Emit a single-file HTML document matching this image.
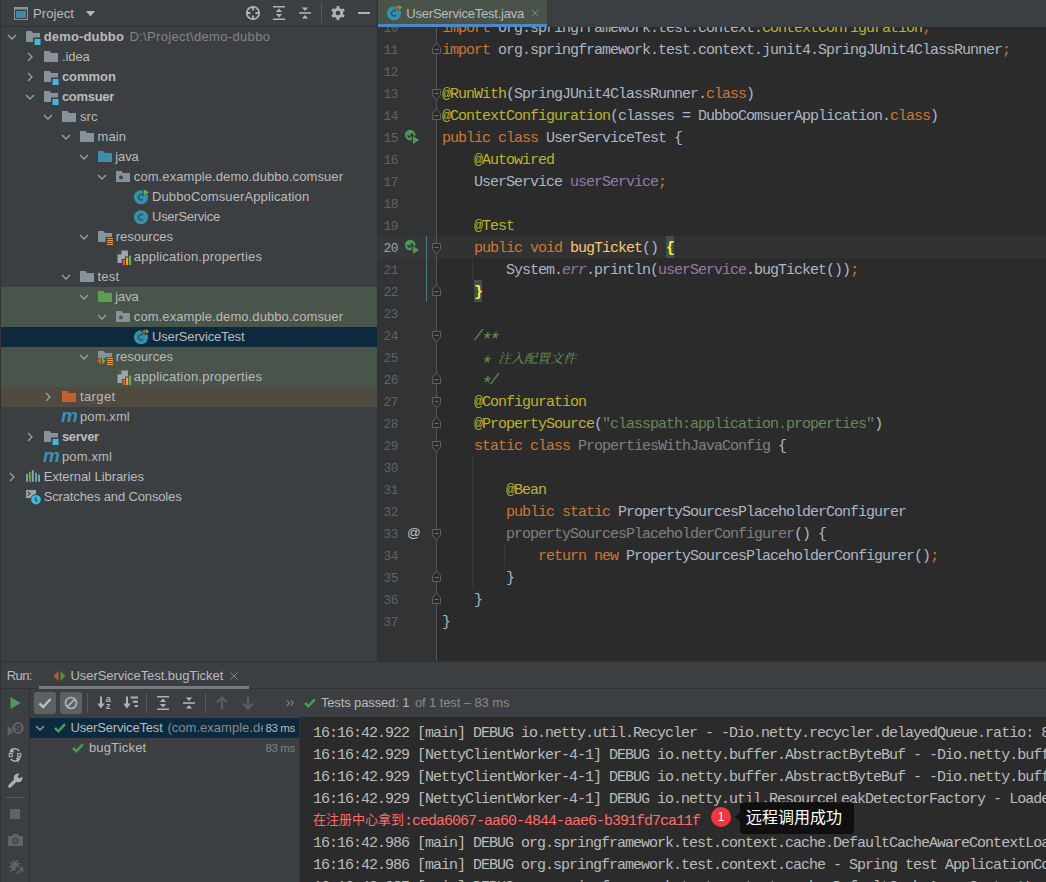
<!DOCTYPE html><html lang="zh"><head><meta charset="utf-8"><title>demo-dubbo</title><style>
*{box-sizing:border-box;margin:0;padding:0}
html,body{width:1046px;height:882px;overflow:hidden;background:#3c3f41}
body{position:relative;font-family:'Liberation Sans', 'Noto Sans CJK SC', sans-serif;font-size:13px;color:#bbbbbb;-webkit-font-smoothing:antialiased}
.abs{position:absolute}
svg{position:absolute;overflow:visible}
/* project panel */
#proj{left:0;top:0;width:377px;height:662px;background:#3c3f41;overflow:hidden}
#projhead{left:0;top:0;width:377px;height:27px;border-bottom:1px solid #323232}
.row{position:absolute;left:1px;width:376px;height:20px;line-height:20px;white-space:nowrap}
.t{position:absolute;top:0;font-size:13px;color:#bbbbbb;white-space:nowrap;height:20px;line-height:20px}
/* editor */
#ed{left:378px;top:0;width:668px;height:662px;background:#2b2b2b;overflow:hidden}
#tabs{left:0;top:0;width:668px;height:27px;background:#3c3f41;z-index:5}
#gut{left:0;top:27px;width:59px;height:635px;background:#313335}
.ln{position:absolute;left:0;width:21px;text-align:left;font-family:'Liberation Mono', 'Noto Sans CJK SC', monospace;font-size:12.8px;letter-spacing:-0.4px;color:#606366;height:22px;line-height:26px;padding-left:5.5px}
.cl{position:absolute;left:64px;height:22px;line-height:26px;font-family:'Liberation Mono', 'Noto Sans CJK SC', monospace;font-size:15px;letter-spacing:-1px;color:#a9b7c6;white-space:pre}
.k{color:#cc7832} .a{color:#bbb529} .s{color:#6a8759} .f{color:#9876aa} .fi{color:#9876aa;font-style:italic}
.m{color:#ffc66d} .u{color:#808080} .d{color:#629755;font-style:italic}
.st{position:relative;top:4.5px;font-size:18px;letter-spacing:-2.8px;line-height:0;margin-left:-1px;margin-right:1px}
.cjd{font-family:'Noto Serif CJK SC','Noto Sans CJK SC',serif;font-size:13px;letter-spacing:0;position:relative;top:-1px}
.br{color:#ffef28;background:#3b514d;font-weight:bold;display:inline-block;height:22px;vertical-align:top}
/* run panel */
#run{left:0;top:662px;width:1046px;height:220px;background:#3c3f41;overflow:hidden}
.co{position:absolute;left:14px;height:22px;line-height:22px;font-family:'Liberation Mono', 'Noto Sans CJK SC', monospace;font-size:15px;letter-spacing:-1px;color:#bbbbbb;white-space:pre}
.cj{font-size:13px;letter-spacing:0;position:relative;top:-1px}
</style></head><body>
<div id="proj" class="abs">
<div class="abs" style="left:0;top:0;width:1px;height:662px;background:#313335"></div>
<div id="projhead" class="abs">
<svg style="left:14px;top:7px" width="14" height="13" viewBox="0 0 14 13"><rect x="0.5" y="0.5" width="13" height="12" fill="none" stroke="#8a9399" stroke-width="1"/><rect x="0" y="0" width="14" height="2.5" fill="#8a9399"/><rect x="2" y="4" width="10" height="7" fill="#3d8aa5"/></svg>
<span class="t" style="left:33.1px;letter-spacing:0.072px;top:4px">Project</span>
<svg style="left:86px;top:11px" width="9" height="6" viewBox="0 0 9 6"><path d="M0 0 H9 L4.5 5.5 Z" fill="#b4b6b7"/></svg>
<svg style="left:245px;top:5px" width="16" height="16" viewBox="0 0 16 16"><circle cx="8" cy="8" r="6.2" fill="none" stroke="#afb1b3" stroke-width="1.8"/><path d="M8 1 V5.5 M8 10.5 V15 M1 8 H5.5 M10.5 8 H15" stroke="#afb1b3" stroke-width="1.8"/></svg>
<svg style="left:271px;top:5px" width="16" height="16" viewBox="0 0 16 16"><path d="M2 1.7 H14 M2 14.3 H14" stroke="#afb1b3" stroke-width="1.6"/><path d="M8 3.6 L11.2 7 H4.8 Z M8 12.4 L11.2 9 H4.8 Z" fill="#afb1b3"/></svg>
<svg style="left:297px;top:5px" width="16" height="16" viewBox="0 0 16 16"><path d="M2 8 H14" stroke="#afb1b3" stroke-width="1.6"/><path d="M8 6 L11.2 2.4 H4.8 Z M8 10 L11.2 13.6 H4.8 Z" fill="#afb1b3"/></svg>
<div class="abs" style="left:321px;top:3px;width:1px;height:20px;background:#555758"></div>
<svg style="left:330px;top:5px" width="16" height="16" viewBox="0 0 16 16"><g transform="translate(8 8)"><circle r="3.8" fill="none" stroke="#afb1b3" stroke-width="2.9"/><g fill="#afb1b3"><rect x="-1.4" y="-7" width="2.8" height="3"/><rect x="-1.4" y="4" width="2.8" height="3"/><rect x="-1.4" y="-7" width="2.8" height="3" transform="rotate(60)"/><rect x="-1.4" y="4" width="2.8" height="3" transform="rotate(60)"/><rect x="-1.4" y="-7" width="2.8" height="3" transform="rotate(120)"/><rect x="-1.4" y="4" width="2.8" height="3" transform="rotate(120)"/></g></g></svg>
<div class="abs" style="left:358px;top:12px;width:12px;height:2px;background:#afb1b3"></div>
</div>
<div class="row" style="top:27px;">
<svg style="left:3.4499999999999993px;top:2px" width="16" height="16" viewBox="0 0 16 16"><path d="M4 6 L8 10 L12 6" fill="none" stroke="#9da0a2" stroke-width="1.3"/></svg>
<svg style="left:24px;top:2px" width="16" height="16" viewBox="0 0 16 16"><path d="M1 2 H6.5 L8 4 H15 V13 H1 Z" fill="#87939a"/><rect x="8" y="8.5" width="8" height="8" fill="#3c3f41"/><rect x="9.5" y="10" width="6" height="6" fill="#40b6e0"/></svg>
<span class="t" style="left:42.7px;letter-spacing:0.165px;font-weight:bold">demo-dubbo</span>
<span class="t" style="left:128.4px;letter-spacing:0.346px;color:#828486">D:\Project\demo-dubbo</span>
</div>
<div class="row" style="top:47px;">
<svg style="left:20.95px;top:2px" width="16" height="16" viewBox="0 0 16 16"><path d="M6 4 L10 8 L6 12" fill="none" stroke="#9da0a2" stroke-width="1.3"/></svg>
<svg style="left:42px;top:2px" width="16" height="16" viewBox="0 0 16 16"><path d="M1 2 H6.5 L8 4 H15 V13 H1 Z" fill="#87939a"/></svg>
<span class="t" style="left:60.9px;letter-spacing:-0.076px;">.idea</span>
</div>
<div class="row" style="top:67px;">
<svg style="left:20.95px;top:2px" width="16" height="16" viewBox="0 0 16 16"><path d="M6 4 L10 8 L6 12" fill="none" stroke="#9da0a2" stroke-width="1.3"/></svg>
<svg style="left:42px;top:2px" width="16" height="16" viewBox="0 0 16 16"><path d="M1 2 H6.5 L8 4 H15 V13 H1 Z" fill="#87939a"/><rect x="8" y="8.5" width="8" height="8" fill="#3c3f41"/><rect x="9.5" y="10" width="6" height="6" fill="#40b6e0"/></svg>
<span class="t" style="left:60.9px;letter-spacing:-0.034px;font-weight:bold">common</span>
</div>
<div class="row" style="top:87px;">
<svg style="left:21.45px;top:2px" width="16" height="16" viewBox="0 0 16 16"><path d="M4 6 L8 10 L12 6" fill="none" stroke="#9da0a2" stroke-width="1.3"/></svg>
<svg style="left:42px;top:2px" width="16" height="16" viewBox="0 0 16 16"><path d="M1 2 H6.5 L8 4 H15 V13 H1 Z" fill="#87939a"/><rect x="8" y="8.5" width="8" height="8" fill="#3c3f41"/><rect x="9.5" y="10" width="6" height="6" fill="#40b6e0"/></svg>
<span class="t" style="left:60.9px;letter-spacing:-0.284px;font-weight:bold">comsuer</span>
</div>
<div class="row" style="top:107px;">
<svg style="left:39.45px;top:2px" width="16" height="16" viewBox="0 0 16 16"><path d="M4 6 L8 10 L12 6" fill="none" stroke="#9da0a2" stroke-width="1.3"/></svg>
<svg style="left:60px;top:2px" width="16" height="16" viewBox="0 0 16 16"><path d="M1 2 H6.5 L8 4 H15 V13 H1 Z" fill="#87939a"/></svg>
<span class="t" style="left:79.0px;letter-spacing:0.028px;">src</span>
</div>
<div class="row" style="top:127px;">
<svg style="left:57.45px;top:2px" width="16" height="16" viewBox="0 0 16 16"><path d="M4 6 L8 10 L12 6" fill="none" stroke="#9da0a2" stroke-width="1.3"/></svg>
<svg style="left:78px;top:2px" width="16" height="16" viewBox="0 0 16 16"><path d="M1 2 H6.5 L8 4 H15 V13 H1 Z" fill="#87939a"/></svg>
<span class="t" style="left:96.4px;letter-spacing:0.171px;">main</span>
</div>
<div class="row" style="top:147px;">
<svg style="left:75.45px;top:2px" width="16" height="16" viewBox="0 0 16 16"><path d="M4 6 L8 10 L12 6" fill="none" stroke="#9da0a2" stroke-width="1.3"/></svg>
<svg style="left:96px;top:2px" width="16" height="16" viewBox="0 0 16 16"><path d="M1 2 H6.5 L8 4 H15 V13 H1 Z" fill="#3d8dab"/></svg>
<span class="t" style="left:114.2px;letter-spacing:-0.086px;">java</span>
</div>
<div class="row" style="top:167px;">
<svg style="left:93.45px;top:2px" width="16" height="16" viewBox="0 0 16 16"><path d="M4 6 L8 10 L12 6" fill="none" stroke="#9da0a2" stroke-width="1.3"/></svg>
<svg style="left:114px;top:2px" width="16" height="16" viewBox="0 0 16 16"><path d="M1 2 H6.5 L8 4 H15 V13 H1 Z" fill="#87939a"/><circle cx="6" cy="8.4" r="1.9" fill="#3c3f41"/></svg>
<span class="t" style="left:132.8px;letter-spacing:0.087px;">com.example.demo.dubbo.comsuer</span>
</div>
<div class="row" style="top:187px;">
<svg style="left:132px;top:2px" width="16" height="16" viewBox="0 0 16 16"><circle cx="8" cy="8.2" r="7" fill="#3592a8"/><path d="M10 10.2 A2.7 2.7 0 1 1 10 6.2" fill="none" stroke="#22505f" stroke-width="1.2"/><path d="M9.6 -1 L17.2 3.3 L9.6 7.6 Z" fill="#3c3f41"/><path d="M10.7 0.2 L16 3.3 L10.7 6.4 Z" fill="#62b543"/></svg>
<span class="t" style="left:151.0px;letter-spacing:0.116px;">DubboComsuerApplication</span>
</div>
<div class="row" style="top:207px;">
<svg style="left:132px;top:2px" width="16" height="16" viewBox="0 0 16 16"><circle cx="8" cy="8.2" r="7" fill="#3592a8"/><path d="M10 10.2 A2.7 2.7 0 1 1 10 6.2" fill="none" stroke="#22505f" stroke-width="1.2"/></svg>
<span class="t" style="left:151.0px;letter-spacing:-0.260px;">UserService</span>
</div>
<div class="row" style="top:227px;">
<svg style="left:75.45px;top:2px" width="16" height="16" viewBox="0 0 16 16"><path d="M4 6 L8 10 L12 6" fill="none" stroke="#9da0a2" stroke-width="1.3"/></svg>
<svg style="left:96px;top:2px" width="16" height="16" viewBox="0 0 16 16"><path d="M1 2 H6.5 L8 4 H15 V13 H1 Z" fill="#87939a"/><rect x="8.5" y="8" width="8" height="9" fill="#3c3f41"/><path d="M10 9.5 H16 M10 11.5 H16 M10 13.5 H16 M10 15.5 H16" stroke="#e8a33d" stroke-width="1.1"/></svg>
<span class="t" style="left:114.7px;letter-spacing:0.028px;">resources</span>
</div>
<div class="row" style="top:247px;">
<svg style="left:114px;top:2px" width="16" height="16" viewBox="0 0 16 16"><path d="M6 1.5 H13 V14 H2.5 V5 Z" fill="#9aa7b0"/><path d="M2.5 5 L6 1.5 V5 Z" fill="#3c3f41"/><path d="M6 1.5 V5 H2.5" fill="none" stroke="#3c3f41" stroke-width="0.8"/><path d="M6.8 16.5 V10 H10 V7.6 H13 V5.7 H17 V16.5 Z" fill="#3c3f41"/><rect x="7.9" y="11" width="2.2" height="5" fill="#e05a2b"/><rect x="11" y="8.6" width="2.2" height="7.4" fill="#e8a33d"/><rect x="14.1" y="6.7" width="2" height="9.3" fill="#62b543"/></svg>
<span class="t" style="left:132.8px;letter-spacing:0.220px;">application.properties</span>
</div>
<div class="row" style="top:267px;">
<svg style="left:57.45px;top:2px" width="16" height="16" viewBox="0 0 16 16"><path d="M4 6 L8 10 L12 6" fill="none" stroke="#9da0a2" stroke-width="1.3"/></svg>
<svg style="left:78px;top:2px" width="16" height="16" viewBox="0 0 16 16"><path d="M1 2 H6.5 L8 4 H15 V13 H1 Z" fill="#87939a"/></svg>
<span class="t" style="left:96.4px;letter-spacing:0.277px;">test</span>
</div>
<div class="row" style="top:287px;background:#49544a;">
<svg style="left:75.45px;top:2px" width="16" height="16" viewBox="0 0 16 16"><path d="M4 6 L8 10 L12 6" fill="none" stroke="#9da0a2" stroke-width="1.3"/></svg>
<svg style="left:96px;top:2px" width="16" height="16" viewBox="0 0 16 16"><path d="M1 2 H6.5 L8 4 H15 V13 H1 Z" fill="#5b9e4d"/></svg>
<span class="t" style="left:114.2px;letter-spacing:-0.086px;">java</span>
</div>
<div class="row" style="top:307px;background:#49544a;">
<svg style="left:93.45px;top:2px" width="16" height="16" viewBox="0 0 16 16"><path d="M4 6 L8 10 L12 6" fill="none" stroke="#9da0a2" stroke-width="1.3"/></svg>
<svg style="left:114px;top:2px" width="16" height="16" viewBox="0 0 16 16"><path d="M1 2 H6.5 L8 4 H15 V13 H1 Z" fill="#87939a"/><circle cx="6" cy="8.4" r="1.9" fill="#49544a"/></svg>
<span class="t" style="left:132.8px;letter-spacing:0.087px;">com.example.demo.dubbo.comsuer</span>
</div>
<div class="row" style="top:327px;background:#0d293e;">
<svg style="left:132px;top:2px" width="16" height="16" viewBox="0 0 16 16"><circle cx="8" cy="8.2" r="7" fill="#3592a8"/><path d="M10 10.2 A2.7 2.7 0 1 1 10 6.2" fill="none" stroke="#22505f" stroke-width="1.2"/><path d="M7.6 2.4 L12.6 -1.2 L17.4 2.4 L12.6 6 Z" fill="#0d293e"/><path d="M8.8 2.4 L12.3 0 V4.8 Z" fill="#e05a2b"/><path d="M12.9 0 L16.2 2.4 L12.9 4.8 Z" fill="#62b543"/></svg>
<span class="t" style="left:151.0px;letter-spacing:-0.153px;">UserServiceTest</span>
</div>
<div class="row" style="top:347px;background:#49544a;">
<svg style="left:75.45px;top:2px" width="16" height="16" viewBox="0 0 16 16"><path d="M4 6 L8 10 L12 6" fill="none" stroke="#9da0a2" stroke-width="1.3"/></svg>
<svg style="left:96px;top:2px" width="16" height="16" viewBox="0 0 16 16"><path d="M1 2 H6.5 L8 4 H15 V13 H1 Z" fill="#87939a"/><rect x="0" y="9.2" width="9" height="8" fill="#49544a"/><rect x="8.6" y="8" width="8" height="9" fill="#49544a"/><path d="M10 9.5 H16 M10 11.5 H16 M10 13.5 H16 M10 15.5 H16" stroke="#e8a33d" stroke-width="1.1"/><path d="M4 8.5 L4 15.5 L0.5 12 Z" fill="#e05a2b"/><path d="M5 8.5 L5 15.5 L8.5 12 Z" fill="#62b543"/></svg>
<span class="t" style="left:114.7px;letter-spacing:0.028px;">resources</span>
</div>
<div class="row" style="top:367px;background:#49544a;">
<svg style="left:114px;top:2px" width="16" height="16" viewBox="0 0 16 16"><path d="M6 1.5 H13 V14 H2.5 V5 Z" fill="#9aa7b0"/><path d="M2.5 5 L6 1.5 V5 Z" fill="#49544a"/><path d="M6 1.5 V5 H2.5" fill="none" stroke="#49544a" stroke-width="0.8"/><path d="M6.8 16.5 V10 H10 V7.6 H13 V5.7 H17 V16.5 Z" fill="#49544a"/><rect x="7.9" y="11" width="2.2" height="5" fill="#e05a2b"/><rect x="11" y="8.6" width="2.2" height="7.4" fill="#e8a33d"/><rect x="14.1" y="6.7" width="2" height="9.3" fill="#62b543"/></svg>
<span class="t" style="left:132.8px;letter-spacing:0.220px;">application.properties</span>
</div>
<div class="row" style="top:387px;background:#4f4b41;">
<svg style="left:38.95px;top:2px" width="16" height="16" viewBox="0 0 16 16"><path d="M6 4 L10 8 L6 12" fill="none" stroke="#9da0a2" stroke-width="1.3"/></svg>
<svg style="left:60px;top:2px" width="16" height="16" viewBox="0 0 16 16"><path d="M1 2 H6.5 L8 4 H15 V13 H1 Z" fill="#c4602b"/></svg>
<span class="t" style="left:79.0px;letter-spacing:0.390px;">target</span>
</div>
<div class="row" style="top:407px;">
<span class="abs" style="left:60px;top:-1px;width:17px;height:20px;line-height:20px;font-family:'Liberation Sans', 'Noto Sans CJK SC', sans-serif;font-style:italic;font-weight:bold;font-size:19px;color:#3a90b6;letter-spacing:-1px">m</span>
<span class="t" style="left:79.0px;letter-spacing:0.096px;">pom.xml</span>
</div>
<div class="row" style="top:427px;">
<svg style="left:20.95px;top:2px" width="16" height="16" viewBox="0 0 16 16"><path d="M6 4 L10 8 L6 12" fill="none" stroke="#9da0a2" stroke-width="1.3"/></svg>
<svg style="left:42px;top:2px" width="16" height="16" viewBox="0 0 16 16"><path d="M1 2 H6.5 L8 4 H15 V13 H1 Z" fill="#87939a"/><rect x="8" y="8.5" width="8" height="8" fill="#3c3f41"/><rect x="9.5" y="10" width="6" height="6" fill="#40b6e0"/></svg>
<span class="t" style="left:60.9px;letter-spacing:-0.349px;font-weight:bold">server</span>
</div>
<div class="row" style="top:447px;">
<span class="abs" style="left:42px;top:-1px;width:17px;height:20px;line-height:20px;font-family:'Liberation Sans', 'Noto Sans CJK SC', sans-serif;font-style:italic;font-weight:bold;font-size:19px;color:#3a90b6;letter-spacing:-1px">m</span>
<span class="t" style="left:60.9px;letter-spacing:0.146px;">pom.xml</span>
</div>
<div class="row" style="top:467px;">
<svg style="left:2.9499999999999993px;top:2px" width="16" height="16" viewBox="0 0 16 16"><path d="M6 4 L10 8 L6 12" fill="none" stroke="#9da0a2" stroke-width="1.3"/></svg>
<svg style="left:24px;top:2px" width="16" height="16" viewBox="0 0 16 16"><rect x="1.1" y="5" width="1.7" height="7.8" fill="#9aa7b0"/><rect x="3.9" y="3" width="1.8" height="9.8" fill="#62b543"/><rect x="6.8" y="1.2" width="1.8" height="11.6" fill="#9aa7b0"/><rect x="10.2" y="3.7" width="1.8" height="9.1" fill="#40b6e0"/><rect x="13.2" y="5.6" width="1.7" height="7.2" fill="#9aa7b0"/></svg>
<span class="t" style="left:42.7px;letter-spacing:-0.056px;">External Libraries</span>
</div>
<div class="row" style="top:487px;">
<svg style="left:24px;top:2px" width="16" height="16" viewBox="0 0 16 16"><path d="M1 1 H11 V9 H1 Z" fill="#9aa7b0"/><path d="M2.6 2.6 L5 4.6 L2.6 6.6" stroke="#3c3f41" stroke-width="1.2" fill="none"/><circle cx="11" cy="10.7" r="5.6" fill="#3c3f41"/><circle cx="11" cy="10.7" r="4.8" fill="#40b6e0"/><path d="M10.6 8 V11 L12.6 12.6" stroke="#3c3f41" stroke-width="1.3" fill="none"/></svg>
<span class="t" style="left:42.7px;letter-spacing:-0.139px;">Scratches and Consoles</span>
</div>
</div>
<div class="abs" style="left:377px;top:0;width:1px;height:662px;background:#323232"></div>
<div id="ed" class="abs">
<div id="tabs" class="abs">
<div class="abs" style="left:0;top:0;width:169px;height:27px;background:#4a534a"></div>
<div class="abs" style="left:0;top:24px;width:169px;height:3px;background:#4a88c7"></div>
<svg style="left:7.5px;top:4.5px" width="16" height="16" viewBox="0 0 16 16"><circle cx="8" cy="8.2" r="7" fill="#3592a8"/><path d="M10 10.2 A2.7 2.7 0 1 1 10 6.2" fill="none" stroke="#22505f" stroke-width="1.2"/><path d="M7.6 2.4 L12.6 -1.2 L17.4 2.4 L12.6 6 Z" fill="#4a534a"/><path d="M8.8 2.4 L12.3 0 V4.8 Z" fill="#e05a2b"/><path d="M12.9 0 L16.2 2.4 L12.9 4.8 Z" fill="#62b543"/></svg>
<span class="t" style="left:28.3px;letter-spacing:-0.216px;top:4px">UserServiceTest.java</span>
<svg style="left:153px;top:9px" width="8" height="8" viewBox="0 0 8 8"><path d="M0.5 0.5 L7.5 7.5 M7.5 0.5 L0.5 7.5" stroke="#7d8487" stroke-width="1"/></svg>
</div>
<div id="gut" class="abs"></div>
<div class="abs" style="left:58px;top:27px;width:1px;height:635px;background:#555555"></div>
<div class="abs" style="left:59px;top:236px;width:609px;height:22px;background:#323232"></div>
<div class="abs" style="left:0;top:236px;width:58px;height:22px;background:#35373a"></div>
<div class="ln" style="top:16px;color:#606366">10</div>
<div class="cl" style="top:16px"><span class="k">import</span> org.springframework.test.context.<span class="a">ContextConfiguration</span><span class="k">;</span></div>
<div class="ln" style="top:38px;color:#606366">11</div>
<div class="cl" style="top:38px"><span class="k">import</span> org.springframework.test.context.junit4.SpringJUnit4ClassRunner<span class="k">;</span></div>
<div class="ln" style="top:60px;color:#606366">12</div>
<div class="ln" style="top:82px;color:#606366">13</div>
<div class="cl" style="top:82px"><span class="a">@RunWith</span>(SpringJUnit4ClassRunner.<span class="k">class</span>)</div>
<div class="ln" style="top:104px;color:#606366">14</div>
<div class="cl" style="top:104px"><span class="a">@ContextConfiguration</span>(classes = DubboComsuerApplication.<span class="k">class</span>)</div>
<div class="ln" style="top:126px;color:#606366">15</div>
<div class="cl" style="top:126px"><span class="k">public class </span>UserServiceTest {</div>
<div class="ln" style="top:148px;color:#606366">16</div>
<div class="cl" style="top:148px">    <span class="a">@Autowired</span></div>
<div class="ln" style="top:170px;color:#606366">17</div>
<div class="cl" style="top:170px">    UserService <span class="f">userService</span><span class="k">;</span></div>
<div class="ln" style="top:192px;color:#606366">18</div>
<div class="ln" style="top:214px;color:#606366">19</div>
<div class="cl" style="top:214px">    <span class="a">@Test</span></div>
<div class="ln" style="top:236px;color:#a4a3a3">20</div>
<div class="cl" style="top:236px">    <span class="k">public void </span><span class="m">bugTicket</span>() <span class="br">{</span></div>
<div class="ln" style="top:258px;color:#606366">21</div>
<div class="cl" style="top:258px">        System.<span class="fi">err</span>.println(<span class="f">userService</span>.bugTicket())<span class="k">;</span></div>
<div class="ln" style="top:280px;color:#606366">22</div>
<div class="cl" style="top:280px">    <span class="br">}</span></div>
<div class="ln" style="top:302px;color:#606366">23</div>
<div class="ln" style="top:324px;color:#606366">24</div>
<div class="cl" style="top:324px">    <span class="d">/<span class="st">*</span><span class="st">*</span></span></div>
<div class="ln" style="top:346px;color:#606366">25</div>
<div class="cl" style="top:346px">    <span class="d"> <span class="st">*</span> <span class="cjd">注入配置文件</span></span></div>
<div class="ln" style="top:368px;color:#606366">26</div>
<div class="cl" style="top:368px">    <span class="d"> <span class="st">*</span>/</span></div>
<div class="ln" style="top:390px;color:#606366">27</div>
<div class="cl" style="top:390px">    <span class="a">@Configuration</span></div>
<div class="ln" style="top:412px;color:#606366">28</div>
<div class="cl" style="top:412px">    <span class="a">@PropertySource</span>(<span class="s">&quot;classpath:application.properties&quot;</span>)</div>
<div class="ln" style="top:434px;color:#606366">29</div>
<div class="cl" style="top:434px">    <span class="k">static class </span><span class="u">PropertiesWithJavaConfig</span> {</div>
<div class="ln" style="top:456px;color:#606366">30</div>
<div class="ln" style="top:478px;color:#606366">31</div>
<div class="cl" style="top:478px">        <span class="a">@Bean</span></div>
<div class="ln" style="top:500px;color:#606366">32</div>
<div class="cl" style="top:500px">        <span class="k">public static </span>PropertySourcesPlaceholderConfigurer</div>
<div class="ln" style="top:522px;color:#606366">33</div>
<div class="cl" style="top:522px">        <span class="u">propertySourcesPlaceholderConfigurer</span>() {</div>
<div class="ln" style="top:544px;color:#606366">34</div>
<div class="cl" style="top:544px">            <span class="k">return new </span>PropertySourcesPlaceholderConfigurer()<span class="k">;</span></div>
<div class="ln" style="top:566px;color:#606366">35</div>
<div class="cl" style="top:566px">        }</div>
<div class="ln" style="top:588px;color:#606366">36</div>
<div class="cl" style="top:588px">    }</div>
<div class="ln" style="top:610px;color:#606366">37</div>
<div class="cl" style="top:610px">}</div>
<svg style="left:54px;top:89px" width="9" height="11" viewBox="0 0 9 11"><path d="M0.5 0.5 H8.5 V6 L4.5 10.5 L0.5 6 Z" fill="#2b2b2b" stroke="#5f5f5f" stroke-width="1"/><path d="M2.5 4.5 H6.5" stroke="#707070" stroke-width="1"/></svg>
<svg style="left:54px;top:243px" width="9" height="11" viewBox="0 0 9 11"><path d="M0.5 0.5 H8.5 V6 L4.5 10.5 L0.5 6 Z" fill="#2b2b2b" stroke="#5f5f5f" stroke-width="1"/><path d="M2.5 4.5 H6.5" stroke="#707070" stroke-width="1"/></svg>
<svg style="left:54px;top:331px" width="9" height="11" viewBox="0 0 9 11"><path d="M0.5 0.5 H8.5 V6 L4.5 10.5 L0.5 6 Z" fill="#2b2b2b" stroke="#5f5f5f" stroke-width="1"/><path d="M2.5 4.5 H6.5" stroke="#707070" stroke-width="1"/></svg>
<svg style="left:54px;top:397px" width="9" height="11" viewBox="0 0 9 11"><path d="M0.5 0.5 H8.5 V6 L4.5 10.5 L0.5 6 Z" fill="#2b2b2b" stroke="#5f5f5f" stroke-width="1"/><path d="M2.5 4.5 H6.5" stroke="#707070" stroke-width="1"/></svg>
<svg style="left:54px;top:441px" width="9" height="11" viewBox="0 0 9 11"><path d="M0.5 0.5 H8.5 V6 L4.5 10.5 L0.5 6 Z" fill="#2b2b2b" stroke="#5f5f5f" stroke-width="1"/><path d="M2.5 4.5 H6.5" stroke="#707070" stroke-width="1"/></svg>
<svg style="left:54px;top:529px" width="9" height="11" viewBox="0 0 9 11"><path d="M0.5 0.5 H8.5 V6 L4.5 10.5 L0.5 6 Z" fill="#2b2b2b" stroke="#5f5f5f" stroke-width="1"/><path d="M2.5 4.5 H6.5" stroke="#707070" stroke-width="1"/></svg>
<svg style="left:54px;top:42px" width="9" height="12" viewBox="0 0 9 12"><path d="M0.5 11.5 H8.5 V5.5 L4.5 0.8 L0.5 5.5 Z" fill="#2b2b2b" stroke="#5f5f5f" stroke-width="1"/><path d="M2.5 7.5 H6.5" stroke="#707070" stroke-width="1"/></svg>
<svg style="left:54px;top:108px" width="9" height="12" viewBox="0 0 9 12"><path d="M0.5 11.5 H8.5 V5.5 L4.5 0.8 L0.5 5.5 Z" fill="#2b2b2b" stroke="#5f5f5f" stroke-width="1"/><path d="M2.5 7.5 H6.5" stroke="#707070" stroke-width="1"/></svg>
<svg style="left:54px;top:284px" width="9" height="12" viewBox="0 0 9 12"><path d="M0.5 11.5 H8.5 V5.5 L4.5 0.8 L0.5 5.5 Z" fill="#2b2b2b" stroke="#5f5f5f" stroke-width="1"/><path d="M2.5 7.5 H6.5" stroke="#707070" stroke-width="1"/></svg>
<svg style="left:54px;top:372px" width="9" height="12" viewBox="0 0 9 12"><path d="M0.5 11.5 H8.5 V5.5 L4.5 0.8 L0.5 5.5 Z" fill="#2b2b2b" stroke="#5f5f5f" stroke-width="1"/><path d="M2.5 7.5 H6.5" stroke="#707070" stroke-width="1"/></svg>
<svg style="left:54px;top:416px" width="9" height="12" viewBox="0 0 9 12"><path d="M0.5 11.5 H8.5 V5.5 L4.5 0.8 L0.5 5.5 Z" fill="#2b2b2b" stroke="#5f5f5f" stroke-width="1"/><path d="M2.5 7.5 H6.5" stroke="#707070" stroke-width="1"/></svg>
<svg style="left:54px;top:570px" width="9" height="12" viewBox="0 0 9 12"><path d="M0.5 11.5 H8.5 V5.5 L4.5 0.8 L0.5 5.5 Z" fill="#2b2b2b" stroke="#5f5f5f" stroke-width="1"/><path d="M2.5 7.5 H6.5" stroke="#707070" stroke-width="1"/></svg>
<svg style="left:54px;top:592px" width="9" height="12" viewBox="0 0 9 12"><path d="M0.5 11.5 H8.5 V5.5 L4.5 0.8 L0.5 5.5 Z" fill="#2b2b2b" stroke="#5f5f5f" stroke-width="1"/><path d="M2.5 7.5 H6.5" stroke="#707070" stroke-width="1"/></svg>
<svg style="left:26px;top:129px" width="16" height="16" viewBox="0 0 16 16"><circle cx="6.2" cy="6.1" r="5.3" fill="#499c54"/><path d="M3.4 6.2 L5.4 8.2 L8.8 4.2" fill="none" stroke="#313335" stroke-width="1.5"/><path d="M7.7 5 L16.8 10.9 L7.7 16.8 Z" fill="#313335"/><path d="M8.9 6.9 L15.2 10.9 L8.9 14.9 Z" fill="#499c54"/></svg>
<svg style="left:26px;top:239px" width="16" height="16" viewBox="0 0 16 16"><circle cx="6.2" cy="6.1" r="5.3" fill="#499c54"/><path d="M3.4 6.2 L5.4 8.2 L8.8 4.2" fill="none" stroke="#313335" stroke-width="1.5"/><path d="M7.7 5 L16.8 10.9 L7.7 16.8 Z" fill="#313335"/><path d="M8.9 6.9 L15.2 10.9 L8.9 14.9 Z" fill="#499c54"/></svg>
<span class="abs" style="left:29px;top:522px;height:22px;line-height:21px;font-size:13.5px;color:#c4c4c4;font-family:'Liberation Sans', 'Noto Sans CJK SC', sans-serif">@</span>
<div class="abs" style="left:48px;top:236px;width:1px;height:66px;background:#4c7c77"></div>
<div class="abs" style="left:94px;top:258px;width:1px;height:22px;background:#393939"></div>
<div class="abs" style="left:94px;top:456px;width:1px;height:132px;background:#393939"></div>
<div class="abs" style="left:126px;top:544px;width:1px;height:22px;background:#393939"></div>
</div>
<div class="abs" style="left:0;top:661px;width:1046px;height:1px;background:#323232;z-index:6"></div>
<div id="run" class="abs">
<div class="abs" style="left:0;top:0;width:1px;height:220px;background:#313335"></div>
<span class="t" style="left:6.8px;letter-spacing:-0.623px;top:4px">Run:</span>
<svg style="left:52.5px;top:8.5px" width="13" height="10" viewBox="0 0 13 10"><path d="M5.5 0 V10 L0.5 5 Z" fill="#b5592f"/><path d="M7.5 0 V10 L12.5 5 Z" fill="#4f8f3f"/></svg>
<span class="t" style="left:70.5px;letter-spacing:-0.056px;top:4px">UserServiceTest.bugTicket</span>
<svg style="left:230px;top:10px" width="8" height="8" viewBox="0 0 8 8"><path d="M0.5 0.5 L7.5 7.5 M7.5 0.5 L0.5 7.5" stroke="#7d8487" stroke-width="1"/></svg>
<div class="abs" style="left:39px;top:24px;width:210px;height:3px;background:#747a80;z-index:2"></div>
<div class="abs" style="left:0;top:26px;width:1046px;height:1px;background:#323232"></div>
<div class="abs" style="left:29px;top:27px;width:1px;height:193px;background:#323232"></div>
<svg style="left:10px;top:35px" width="11" height="12" viewBox="0 0 11 12"><path d="M0.5 0 L10.5 6 L0.5 12 Z" fill="#499c54"/></svg>
<svg style="left:7px;top:60px" width="17" height="14" viewBox="0 0 17 14"><path d="M0.6 4 L8.6 8.8 L0.6 13.6 Z" fill="#5e6163"/><circle cx="11" cy="6" r="6.6" fill="#3c3f41"/><circle cx="11" cy="6" r="5.9" fill="#5e6163"/><text x="11" y="9.6" text-anchor="middle" font-family="'Liberation Sans', 'Noto Sans CJK SC', sans-serif" font-weight="bold" font-size="11" fill="#3c3f41" stroke="#3c3f41" stroke-width="0.4">9</text></svg>
<svg style="left:8px;top:85px" width="14" height="16" viewBox="0 0 14 16"><path d="M2.2 5.2 A5 5 0 0 1 11.2 4.2" fill="none" stroke="#afb1b3" stroke-width="1.5"/><path d="M3.8 0.8 L1.6 5.6 L6.2 5.2 Z" fill="#afb1b3"/><path d="M11.8 10.8 A5 5 0 0 1 2.8 11.8" fill="none" stroke="#afb1b3" stroke-width="1.5"/><path d="M10.2 15.2 L12.4 10.4 L7.8 10.8 Z" fill="#afb1b3"/><rect x="1.2" y="6.6" width="3" height="3" fill="none" stroke="#afb1b3" stroke-width="1.1"/><rect x="9.8" y="6.6" width="3" height="3" fill="none" stroke="#afb1b3" stroke-width="1.1"/></svg>
<svg style="left:8px;top:111px" width="15" height="15" viewBox="0 0 15 15"><path d="M1.8 13.2 L8.4 6.6" stroke="#afb1b3" stroke-width="3.2" stroke-linecap="round"/><path d="M14.2 3.4 L11.6 5.6 L9.4 3.4 L11.6 0.8 A4.4 4.4 0 1 0 14.2 3.4 Z" fill="#afb1b3"/></svg>
<div class="abs" style="left:5px;top:135px;width:20px;height:1px;background:#555758"></div>
<div class="abs" style="left:10px;top:147px;width:10px;height:10px;background:#616365"></div>
<svg style="left:8px;top:172px" width="15" height="12" viewBox="0 0 15 12"><path d="M0 2 H4 L5 0 H10 L11 2 H15 V12 H0 Z" fill="#616365"/><circle cx="7.5" cy="6.8" r="3" fill="#3c3f41"/><circle cx="7.5" cy="6.8" r="1.7" fill="#616365"/></svg>
<svg style="left:9px;top:197px" width="14" height="15" viewBox="0 0 14 15"><ellipse cx="6" cy="7.5" rx="3.6" ry="4.6" fill="#616365"/><path d="M1 4 L4 6 M11 4 L8 6 M0 8 H3 M1 12.5 L4 10 M3.5 1 L5.5 3.5 M8.5 1 L6.5 3.5" stroke="#616365" stroke-width="1.3"/><rect x="6.5" y="8" width="8" height="8" fill="#3c3f41"/><path d="M8 14.5 L13 9.5 M9.5 9 H13.5 V13" stroke="#616365" stroke-width="1.5" fill="none"/></svg>
<div class="abs" style="left:34px;top:30px;width:22px;height:22px;border-radius:3px;background:#5c6164"></div>
<div class="abs" style="left:60px;top:30px;width:22px;height:22px;border-radius:3px;background:#5c6164"></div>
<svg style="left:38px;top:35px" width="14" height="12" viewBox="0 0 14 12"><path d="M1.5 6.3 L5.2 10 L12.5 2" fill="none" stroke="#bcbec0" stroke-width="2.4"/></svg>
<svg style="left:64px;top:34px" width="14" height="14" viewBox="0 0 14 14"><circle cx="7" cy="7" r="5.5" fill="none" stroke="#b0b2b4" stroke-width="1.7"/><path d="M3.2 10.8 L10.8 3.2" stroke="#b0b2b4" stroke-width="1.7"/></svg>
<div class="abs" style="left:87px;top:31px;width:1px;height:20px;background:#555758"></div>
<svg style="left:97px;top:34px" width="15" height="14" viewBox="0 0 15 14"><path d="M4 0.5 V10" stroke="#afb1b3" stroke-width="2"/><path d="M0.3 7.6 L4 12.6 L7.7 7.6 Z" fill="#afb1b3"/><text x="11.2" y="6.4" text-anchor="middle" font-family="'Liberation Sans', 'Noto Sans CJK SC', sans-serif" font-weight="bold" font-size="9.5" fill="#afb1b3">a</text><text x="11.2" y="12.8" text-anchor="middle" font-family="'Liberation Sans', 'Noto Sans CJK SC', sans-serif" font-weight="bold" font-size="9.5" fill="#afb1b3">z</text></svg>
<svg style="left:123px;top:34px" width="15" height="14" viewBox="0 0 15 14"><path d="M4 0.5 V10" stroke="#afb1b3" stroke-width="2"/><path d="M0.3 7.6 L4 12.6 L7.7 7.6 Z" fill="#afb1b3"/><path d="M7.6 1.6 H15 M9.8 5.8 H15 M11.8 10 H15" stroke="#afb1b3" stroke-width="2"/></svg>
<div class="abs" style="left:146px;top:31px;width:1px;height:20px;background:#555758"></div>
<svg style="left:155px;top:33px" width="16" height="16" viewBox="0 0 16 16"><path d="M2 1.7 H14 M2 14.3 H14" stroke="#afb1b3" stroke-width="1.6"/><path d="M8 3.6 L11.2 7 H4.8 Z M8 12.4 L11.2 9 H4.8 Z" fill="#afb1b3"/></svg>
<svg style="left:181px;top:33px" width="16" height="16" viewBox="0 0 16 16"><path d="M2 8 H14" stroke="#afb1b3" stroke-width="1.6"/><path d="M8 6 L11.2 2.4 H4.8 Z M8 10 L11.2 13.6 H4.8 Z" fill="#afb1b3"/></svg>
<div class="abs" style="left:205px;top:31px;width:1px;height:20px;background:#555758"></div>
<svg style="left:216px;top:34px" width="12" height="14" viewBox="0 0 12 14"><path d="M6 13.5 V2 M1 6.5 L6 1.5 L11 6.5" fill="none" stroke="#5c5f61" stroke-width="2"/></svg>
<svg style="left:242px;top:34px" width="12" height="14" viewBox="0 0 12 14"><path d="M6 0.5 V12 M1 7.5 L6 12.5 L11 7.5" fill="none" stroke="#5c5f61" stroke-width="2"/></svg>
<svg style="left:286px;top:37px" width="9" height="8" viewBox="0 0 9 8"><path d="M1 1.2 L3.4 4 L1 6.8 M4.8 1.2 L7.2 4 L4.8 6.8" fill="none" stroke="#9fa1a3" stroke-width="1"/></svg>
<svg style="left:304px;top:36px" width="12" height="10" viewBox="0 0 12 10"><path d="M1 5 L4.4 8.3 L11 1.2" fill="none" stroke="#499c54" stroke-width="2.5"/></svg>
<span class="t" style="left:320.9px;letter-spacing:-0.131px;top:31px">Tests passed: 1</span>
<span class="t" style="left:414.9px;letter-spacing:-0.101px;top:31px;color:#8a8a8a">of 1 test – 83 ms</span>
<div class="abs" style="left:30px;top:56px;width:269px;height:20px;background:#0d293e"></div>
<svg style="left:31.5px;top:58px" width="16" height="16" viewBox="0 0 16 16"><path d="M4 6 L8 10 L12 6" fill="none" stroke="#9da0a2" stroke-width="1.3"/></svg>
<svg style="left:54px;top:61px" width="12" height="10" viewBox="0 0 12 10"><path d="M1 5 L4.4 8.3 L11 1.2" fill="none" stroke="#499c54" stroke-width="2.5"/></svg>
<span class="t" style="left:70.5px;letter-spacing:-0.167px;top:56px">UserServiceTest</span>
<div class="abs" style="left:168px;top:56px;width:95px;height:20px;overflow:hidden"><span class="t" style="left:-0.6px;letter-spacing:0.022px;color:#8a8a8a">(com.example.demo.dubbo.comsuer)</span></div>
<span class="t" style="left:265.6px;letter-spacing:-0.407px;top:56px;font-size:11.5px">83 ms</span>
<svg style="left:72px;top:81px" width="12" height="10" viewBox="0 0 12 10"><path d="M1 5 L4.4 8.3 L11 1.2" fill="none" stroke="#499c54" stroke-width="2.5"/></svg>
<span class="t" style="left:88.9px;letter-spacing:0.176px;top:76px">bugTicket</span>
<span class="t" style="left:265.6px;letter-spacing:-0.407px;top:76px;font-size:11.5px;color:#7e8082">83 ms</span>
<div class="abs" style="left:299px;top:55px;width:747px;height:165px;background:#2b2b2b;overflow:hidden">
<div class="abs" style="left:0;top:0;width:1px;height:165px;background:#323232"></div>
<div class="co" style="top:6px;">16:16:42.922 [main] DEBUG io.netty.util.Recycler - -Dio.netty.recycler.delayedQueue.ratio: 8</div>
<div class="co" style="top:28px;">16:16:42.929 [NettyClientWorker-4-1] DEBUG io.netty.buffer.AbstractByteBuf - -Dio.netty.buffer.checkAccessible: true</div>
<div class="co" style="top:50px;">16:16:42.929 [NettyClientWorker-4-1] DEBUG io.netty.buffer.AbstractByteBuf - -Dio.netty.buffer.checkBounds: true</div>
<div class="co" style="top:72px;">16:16:42.929 [NettyClientWorker-4-1] DEBUG io.netty.util.ResourceLeakDetectorFactory - Loaded default ResourceLeakDetector: io.netty.util.ResourceLeakDetector</div>
<div class="co" style="top:94px;color:#ff6b68;"><span class="cj">在注册中心拿到</span>:ceda6067-aa60-4844-aae6-b391fd7ca11f</div>
<div class="co" style="top:116px;">16:16:42.986 [main] DEBUG org.springframework.test.context.cache.DefaultCacheAwareContextLoaderDelegate - Storing ApplicationContext</div>
<div class="co" style="top:138px;">16:16:42.986 [main] DEBUG org.springframework.test.context.cache - Spring test ApplicationContext cache statistics</div>
<div class="co" style="top:160px;">16:16:42.987 [main] DEBUG org.springframework.test.context.cache.DefaultCacheAwareContextLoaderDelegate - Retrieved ApplicationContext</div>
</div>
<div class="abs" style="left:711px;top:145px;width:20px;height:20px;border-radius:10px;background:#f5343b;color:#fff;font-size:12px;line-height:20px;text-align:center">1</div>
<svg style="left:735px;top:150px" width="6" height="10" viewBox="0 0 6 10"><path d="M6 0 L0 5 L6 10 Z" fill="rgba(10,10,10,0.85)"/></svg>
<div class="abs" style="left:740px;top:140px;width:114px;height:32px;border-radius:4px;background:rgba(10,10,10,0.85);color:#fff;font-size:16px;line-height:31px;padding-left:6px;white-space:nowrap;font-family:'Liberation Sans', 'Noto Sans CJK SC', sans-serif">远程调用成功</div>
</div>
</body></html>
